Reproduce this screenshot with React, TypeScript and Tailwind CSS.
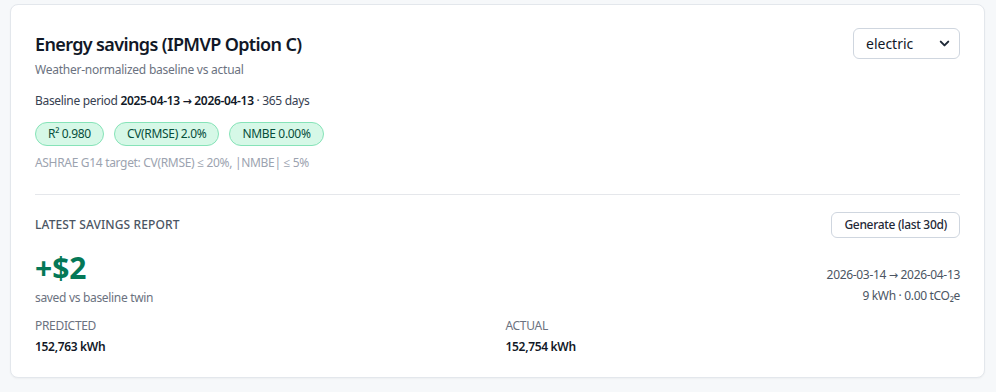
import { ChevronDown } from "lucide-react";

function Badge({ children }: { children: React.ReactNode }) {
  return (
    <span className="inline-flex items-center h-6 px-3 rounded-full border border-[#86e3b8] bg-[#d6f8e7] text-[12px] text-[#064e3b]">
      {children}
    </span>
  );
}

function Arrow() {
  return <span className="font-['DejaVu_Sans'] text-[11px] leading-none">→</span>;
}

export default function App() {
  return (
    <div
      className="min-h-[392px] bg-[#f6f8fa] pl-[10px] pr-[11px] pt-1 pb-4 tracking-[-0.02em]"
      style={{ fontFamily: '"Noto Sans", "Open Sans", sans-serif' }}
    >
      <div className="bg-white border border-[#e3e7ec] rounded-lg px-6 pt-[26px] pb-[22px] shadow-[0_1px_2px_rgba(0,0,0,0.04)]">
        {/* Header */}
        <div className="flex items-start justify-between">
          <div>
            <h2 className="text-[18px] leading-[26px] font-semibold tracking-[-0.035em] text-[#111827]">
              Energy savings (IPMVP Option C)
            </h2>
            <p className="mt-[5px] text-[12px] leading-4 tracking-[-0.02em] text-[#6b7280]">
              Weather-normalized baseline vs actual
            </p>
          </div>
          <div className="-mt-[3px]">
            <div className="flex items-center justify-between w-[107px] h-[31px] pl-3 pr-[7px] border border-[#cfd6df] rounded-md text-[14px] tracking-normal text-[#111827]">
              <span>electric</span>
              <ChevronDown size={15} strokeWidth={3.2} className="text-[#1f2937]" />
            </div>
          </div>
        </div>

        <p className="mt-[15px] text-[12px] leading-4 text-[#374151]">
          Baseline period{" "}
          <span className="font-semibold text-[#111827]">
            2025-04-13 <Arrow /> 2026-04-13
          </span>{" "}
          · 365 days
        </p>

        <div className="mt-[13px] flex gap-2.5">
          <Badge>R² 0.980</Badge>
          <Badge>CV(RMSE) 2.0%</Badge>
          <Badge>NMBE 0.00%</Badge>
        </div>

        <p className="mt-[9px] text-[12px] leading-4 text-[#9ca3af]">
          ASHRAE G14 target: CV(RMSE) ≤ 20%, |NMBE| ≤ 5%
        </p>

        <div className="mt-[23px] border-t border-[#e5e7eb]" />

        {/* Report */}
        <div className="mt-[17px] flex items-center justify-between">
          <h3 className="text-[12px] leading-4 uppercase font-medium tracking-[0.01em] text-[#4b5563]">
            Latest savings report
          </h3>
          <button className="h-[26px] px-3 border border-[#cfd6df] rounded-md text-[12px] font-medium text-[#1f2937] bg-white">
            Generate (last 30d)
          </button>
        </div>

        <div className="mt-[12px] flex items-start justify-between">
          <div>
            <div className="text-[30px] leading-9 font-bold tracking-normal text-[#047857]">+$2</div>
            <div className="mt-[4px] text-[12px] leading-4 text-[#6b7280]">saved vs baseline twin</div>
          </div>
          <div className="mt-[14px] text-right text-[12px] leading-[21px] text-[#4b5563]">
            <div>
              2026-03-14 <Arrow /> 2026-04-13
            </div>
            <div>9 kWh · 0.00 tCO₂e</div>
          </div>
        </div>

        <div className="mt-[12px] grid grid-cols-2 gap-4">
          <div>
            <div className="text-[12px] leading-4 uppercase text-[#6b7280]">Predicted</div>
            <div className="mt-[5px] text-[12px] leading-4 font-semibold text-[#111827]">152,763 kWh</div>
          </div>
          <div>
            <div className="text-[12px] leading-4 uppercase text-[#6b7280]">Actual</div>
            <div className="mt-[5px] text-[12px] leading-4 font-semibold text-[#111827]">152,754 kWh</div>
          </div>
        </div>
      </div>
    </div>
  );
}
